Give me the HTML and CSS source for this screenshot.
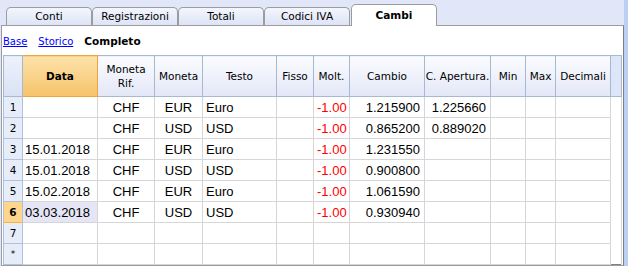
FILE: index.html
```html
<!DOCTYPE html>
<html lang="it">
<head>
    <meta charset="UTF-8" />
    <title>Cambi</title>
    <link rel="stylesheet" href="styles.css">
</head>
<body>
    <div class="app">
        <div class="main">
            <div class="tabs">
                <div class="tab">Conti</div>
                <div class="tab">Registrazioni</div>
                <div class="tab">Totali</div>
                <div class="tab">Codici IVA</div>
                <div class="tab active">Cambi</div>
            </div>
            <div class="panel">
                <div class="views">
                    <a href="#">Base</a>
                    <a href="#">Storico</a>
                    <span class="current">Completo</span>
                </div>
                <table class="grid">
                    <colgroup>
                        <col style="width:19px">
                        <col style="width:75px">
                        <col style="width:57px">
                        <col style="width:48px">
                        <col style="width:74px">
                        <col style="width:37px">
                        <col style="width:36px">
                        <col style="width:75px">
                        <col style="width:66px">
                        <col style="width:35px">
                        <col style="width:30px">
                        <col style="width:55px">
                        <col style="width:11px">
                    </colgroup>
                    <thead>
                        <tr>
                            <th class="corner"></th>
                            <th class="sorted">Data</th>
                            <th>Moneta<br>Rif.</th>
                            <th>Moneta</th>
                            <th>Testo</th>
                            <th>Fisso</th>
                            <th>Molt.</th>
                            <th>Cambio</th>
                            <th>C. Apertura.</th>
                            <th>Min</th>
                            <th>Max</th>
                            <th>Decimali</th>
                            <th class="filler"></th>
                        </tr>
                    </thead>
                    <tbody>
                        <tr>
                            <td class="num">1</td><td class="date"></td><td class="c">CHF</td><td class="c">EUR</td><td>Euro</td><td></td>
                            <td class="r neg">-1.00</td><td class="r">1.215900</td><td class="r">1.225660</td><td></td><td></td><td></td><td class="filler"></td>
                        </tr>
                        <tr>
                            <td class="num">2</td><td class="date"></td><td class="c">CHF</td><td class="c">USD</td><td>USD</td><td></td>
                            <td class="r neg">-1.00</td><td class="r">0.865200</td><td class="r">0.889020</td><td></td><td></td><td></td><td class="filler"></td>
                        </tr>
                        <tr>
                            <td class="num">3</td><td class="date">15.01.2018</td><td class="c">CHF</td><td class="c">EUR</td><td>Euro</td><td></td>
                            <td class="r neg">-1.00</td><td class="r">1.231550</td><td></td><td></td><td></td><td></td><td class="filler"></td>
                        </tr>
                        <tr>
                            <td class="num">4</td><td class="date">15.01.2018</td><td class="c">CHF</td><td class="c">USD</td><td>USD</td><td></td>
                            <td class="r neg">-1.00</td><td class="r">0.900800</td><td></td><td></td><td></td><td></td><td class="filler"></td>
                        </tr>
                        <tr>
                            <td class="num">5</td><td class="date">15.02.2018</td><td class="c">CHF</td><td class="c">EUR</td><td>Euro</td><td></td>
                            <td class="r neg">-1.00</td><td class="r">1.061590</td><td></td><td></td><td></td><td></td><td class="filler"></td>
                        </tr>
                        <tr class="selected">
                            <td class="num">6</td><td class="date cursor">03.03.2018</td><td class="c">CHF</td><td class="c">USD</td><td>USD</td><td></td>
                            <td class="r neg">-1.00</td><td class="r">0.930940</td><td></td><td></td><td></td><td></td><td class="filler"></td>
                        </tr>
                        <tr>
                            <td class="num">7</td><td></td><td></td><td></td><td></td><td></td>
                            <td></td><td></td><td></td><td></td><td></td><td></td><td class="filler"></td>
                        </tr>
                        <tr>
                            <td class="num star">*</td><td></td><td></td><td></td><td></td><td></td>
                            <td></td><td></td><td></td><td></td><td></td><td></td><td class="filler"></td>
                        </tr>
                    </tbody>
                </table>
            </div>
        </div>
        <div class="side"></div>
    </div>
</body>
</html>
```

FILE: styles.css
```css
html, body {
    margin: 0;
    padding: 0;
}
body {
    width: 628px;
    height: 266px;
    overflow: hidden;
    background-color: #e1e7f8;
    font-family: "DejaVu Sans", sans-serif;
    color: #000;
}
.app {
    display: flex;
    height: 266px;
}
.main {
    width: 624px;
    display: flex;
    flex-direction: column;
}
.side {
    width: 4px;
    background-color: #bacff1;
}

/* tab strip */
.tabs {
    height: 25px;
    display: flex;
    align-items: flex-end;
    padding-left: 6px;
    position: relative;
    z-index: 1;
}
.tab {
    box-sizing: border-box;
    width: 86px;
    height: 18px;
    border: 1px solid #9c9c9c;
    border-bottom: none;
    border-radius: 5px 5px 0 0;
    background: linear-gradient(#f3f6fd, #dde4f6);
    font-size: 10.5px;
    line-height: 17px;
    text-align: center;
}
.tab.active {
    height: 22px;
    margin-left: 1px;
    margin-bottom: -1px;
    background: #fff;
    font-weight: bold;
    line-height: 20px;
}

/* panel */
.panel {
    flex: 1;
    margin-left: 1px;
    background-color: #fff;
    border: 1px solid #9c9c9c;
    border-right-color: #7f7f7f;
}
.views {
    height: 28px;
    display: flex;
    align-items: center;
    gap: 11px;
    padding: 1px 0 0 1px;
    font-size: 10px;
}
.views a {
    color: #0000ff;
}
.views .current {
    font-weight: bold;
    font-size: 10.5px;
}

/* grid */
.grid {
    margin-left: 1px;
    width: 619px;
    table-layout: fixed;
    border-collapse: collapse;
    border: 1px solid #828282;
}
.grid th {
    height: 40px;
    padding: 0;
    border: 1px solid #a7b8d0;
    background: linear-gradient(#fbfcff, #e3e8f7);
    font-weight: normal;
    font-size: 10.5px;
    line-height: 14px;
    text-align: center;
}
.grid th.corner {
    background: linear-gradient(#edf1fb, #d9e2f5);
}
.grid th.sorted {
    background: linear-gradient(#fce2aa, #f6c36a);
    border-color: #f0a33c;
    font-weight: bold;
}
.grid th.filler {
    background: #dde5f8;
}
.grid td {
    height: 20px;
    padding: 0 3px;
    border: 1px solid #d6d6d6;
    font-family: "Liberation Sans", Arial, sans-serif;
    font-size: 13px;
    white-space: nowrap;
    overflow: hidden;
}
.grid td.date {
    padding-left: 2px;
}
.grid td.c {
    text-align: center;
}
.grid td.r {
    text-align: right;
    padding-right: 4px;
}
.grid td.neg {
    color: #ff0000;
}
.grid td.num {
    padding: 0;
    background-color: #e6edf9;
    border-color: #afc2dd;
    font-family: "DejaVu Sans", sans-serif;
    font-size: 10.5px;
    text-align: center;
}
.grid td.star {
    font-size: 9px;
}
.grid .selected td.num {
    background-color: #fdd68c;
    border-bottom-color: #f4b24e;
    font-weight: bold;
}
.grid td.cursor {
    background-color: #e5e5f5;
}
.grid td.filler {
    border-top: none;
    border-bottom: none;
}
```
